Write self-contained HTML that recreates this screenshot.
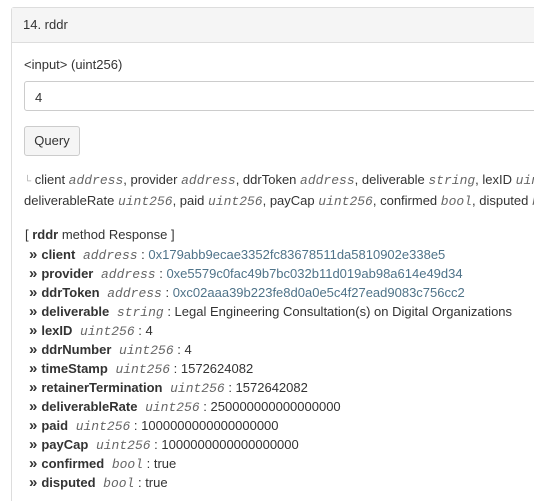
<!DOCTYPE html><html><head><style>
html,body{margin:0;width:534px;height:501px;overflow:hidden}
body{background:#fff;font-family:"Liberation Sans",sans-serif;font-size:13px;color:#333}
.wrap{position:relative;width:534px;height:501px;overflow:hidden}
.panel{position:absolute;left:11px;top:7px;width:540px;height:520px;border:1px solid #ddd;border-radius:3px}
.hd{height:34px;background:#f5f5f5;border-bottom:1px solid #ddd;line-height:34px;padding-left:11px;font-size:13px}
.abs{position:absolute;white-space:nowrap}
.inp{left:24px;top:81px;width:520px;height:30px;border:1px solid #ccc;border-radius:3px;line-height:31px;padding-left:10px;box-sizing:border-box}
.btn{left:24px;top:126px;width:56px;height:30px;border:1px solid #ccc;border-radius:3px;background:#f5f5f5;line-height:28px;text-align:center;box-sizing:border-box}
i{font-family:"Liberation Mono",monospace;font-size:13px;color:#666}
.r{left:29px;font-size:13px}
.r div{height:19px;line-height:19px}
.r b{color:#333;margin-right:4px}.a{color:#4f7389}
.ch{font-weight:bold;font-size:15px;margin-right:4px;line-height:15px}
</style></head><body><div class="wrap">
<div class="panel"><div class="hd">14. rddr</div></div>
<div class="abs" style="left:24px;top:57px">&lt;input&gt; (uint256)</div>
<div class="abs inp">4</div>
<div class="abs btn">Query</div>
<div class="abs" style="left:24px;top:170px;line-height:19px"><span style="color:#aaa;font-size:10px">└</span> client <i>address</i>, provider <i>address</i>, ddrToken <i>address</i>, deliverable <i>string</i>, lexID <i>uint256</i><br>deliverableRate <i>uint256</i>, paid <i>uint256</i>, payCap <i>uint256</i>, confirmed <i>bool</i>, disputed <i>bool</i></div>
<div class="abs" style="left:25px;top:227px">[ <b>rddr</b> method Response ]</div>
<div class="abs r" style="top:245px">
<div><span class="ch">»</span><b>client</b> <i>address</i> : <span class="a">0x179abb9ecae3352fc83678511da5810902e338e5</span></div>
<div><span class="ch">»</span><b>provider</b> <i>address</i> : <span class="a">0xe5579c0fac49b7bc032b11d019ab98a614e49d34</span></div>
<div><span class="ch">»</span><b>ddrToken</b> <i>address</i> : <span class="a">0xc02aaa39b223fe8d0a0e5c4f27ead9083c756cc2</span></div>
<div><span class="ch">»</span><b>deliverable</b> <i>string</i> : Legal Engineering Consultation(s) on Digital Organizations</div>
<div><span class="ch">»</span><b>lexID</b> <i>uint256</i> : 4</div>
<div><span class="ch">»</span><b>ddrNumber</b> <i>uint256</i> : 4</div>
<div><span class="ch">»</span><b>timeStamp</b> <i>uint256</i> : 1572624082</div>
<div><span class="ch">»</span><b>retainerTermination</b> <i>uint256</i> : 1572642082</div>
<div><span class="ch">»</span><b>deliverableRate</b> <i>uint256</i> : 250000000000000000</div>
<div><span class="ch">»</span><b>paid</b> <i>uint256</i> : 1000000000000000000</div>
<div><span class="ch">»</span><b>payCap</b> <i>uint256</i> : 1000000000000000000</div>
<div><span class="ch">»</span><b>confirmed</b> <i>bool</i> : true</div>
<div><span class="ch">»</span><b>disputed</b> <i>bool</i> : true</div>
</div>
</div></body></html>
